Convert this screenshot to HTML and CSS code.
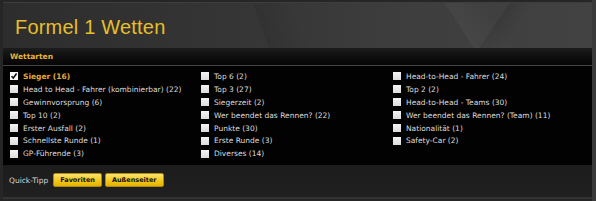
FILE: index.html
```html
<!DOCTYPE html>
<html lang="de">
<head>
<meta charset="utf-8">
<title>Formel 1 Wetten</title>
<link rel="stylesheet" href="styles.css">
</head>
<body>
<div class="frame">
  <div class="panel">
    <header class="head">
      <h1 class="title">Formel 1 Wetten</h1>
    </header>
    <div class="bar">Wettarten</div>
    <div class="list">
      <div class="col">
        <label class="item sel"><span class="box on"><svg viewBox="0 0 8 8" width="8" height="8"><path d="M1.5 4.2 L3.3 6 L6.6 1.6" fill="none" stroke="#111" stroke-width="1.6"/></svg></span>Sieger (16)</label>
        <label class="item"><span class="box"></span>Head to Head - Fahrer (kombinierbar) (22)</label>
        <label class="item"><span class="box"></span>Gewinnvorsprung (6)</label>
        <label class="item"><span class="box"></span>Top 10 (2)</label>
        <label class="item"><span class="box"></span>Erster Ausfall (2)</label>
        <label class="item"><span class="box"></span>Schnellste Runde (1)</label>
        <label class="item"><span class="box"></span>GP-Führende (3)</label>
      </div>
      <div class="col">
        <label class="item"><span class="box"></span>Top 6 (2)</label>
        <label class="item"><span class="box"></span>Top 3 (27)</label>
        <label class="item"><span class="box"></span>Siegerzeit (2)</label>
        <label class="item"><span class="box"></span>Wer beendet das Rennen? (22)</label>
        <label class="item"><span class="box"></span>Punkte (30)</label>
        <label class="item"><span class="box"></span>Erste Runde (3)</label>
        <label class="item"><span class="box"></span>Diverses (14)</label>
      </div>
      <div class="col">
        <label class="item"><span class="box"></span>Head-to-Head - Fahrer (24)</label>
        <label class="item"><span class="box"></span>Top 2 (2)</label>
        <label class="item"><span class="box"></span>Head-to-Head - Teams (30)</label>
        <label class="item"><span class="box"></span>Wer beendet das Rennen? (Team) (11)</label>
        <label class="item"><span class="box"></span>Nationalität (1)</label>
        <label class="item"><span class="box"></span>Safety-Car (2)</label>
      </div>
    </div>
    <footer class="foot">
      <span class="qt">Quick-Tipp</span>
      <button class="btn">Favoriten</button>
      <button class="btn">Außenseiter</button>
    </footer>
  </div>
</div>
</body>
</html>
```

FILE: styles.css
```css
html, body {
  margin: 0;
  padding: 0;
  background: #2b2b2b;
}
body {
  width: 596px;
  height: 201px;
  overflow: hidden;
  font-family: "DejaVu Sans", Verdana, sans-serif;
}
.frame {
  padding: 2px 4px 2px 3px;
  background: linear-gradient(to right, #262626 0, #262626 592px, #3a3a3a 592px);
  height: 201px;
  box-sizing: border-box;
}
.panel {
  display: flex;
  flex-direction: column;
  height: 100%;
}
.head {
  height: 46px;
  box-sizing: border-box;
  padding: 13px 0 0 12px;
  background:
    linear-gradient(57deg, transparent 0, transparent 395px, rgba(255,255,255,0.035) 395px, rgba(255,255,255,0.0) 430px),
    linear-gradient(124deg, transparent 0, transparent 420px, rgba(0,0,0,0.10) 420px, rgba(0,0,0,0.0) 440px),
    linear-gradient(70deg, transparent 0, transparent 250px, rgba(0,0,0,0.08) 250px, transparent 290px),
    linear-gradient(to right, #2d2d2d 0, #353535 40%, #3e3e3e 70%, #424242 100%);
  border-top: 1px solid #3e3e3e;
}
.title {
  margin: 0;
  font-family: "Liberation Sans", Arial, sans-serif;
  font-weight: normal;
  font-size: 20px;
  line-height: 22px;
  color: #e6bf2a;
  letter-spacing: 0.2px;
}
.bar {
  height: 18px;
  box-sizing: border-box;
  padding-left: 7px;
  line-height: 18px;
  font-size: 7.5px;
  font-weight: bold;
  color: #e8b43a;
  background: linear-gradient(to bottom, #1c1c1c 0, #0f0f0f 50%, #050505 100%);
  border-bottom: 1px solid #454545;
}
.list {
  display: grid;
  grid-template-columns: 191px 192px 1fr;
  padding: 4px 0 6px 7px;
  background: #020202;
  height: 99px;
  box-sizing: border-box;
}
.col {
  display: flex;
  flex-direction: column;
}
.item {
  display: flex;
  align-items: center;
  height: 12.9px;
  font-size: 7.5px;
  color: #dcdcdc;
  white-space: nowrap;
}
.item.sel {
  color: #e8a936;
  font-weight: bold;
}
.box {
  width: 8px;
  height: 8px;
  margin-right: 5px;
  background: linear-gradient(#f4f4f4, #dcdcdc);
  flex: none;
  display: flex;
}
.box.on { background: #fafafa; }
.foot {
  flex: 1;
  display: flex;
  align-items: center;
  gap: 3px;
  padding: 0 0 2px 6px;
  background: linear-gradient(#1c1c1c, #202020);
  border-bottom: 2px solid #333;
}
.qt {
  font-size: 7.5px;
  color: #d8d8d8;
  margin-right: 2px;
}
.btn {
  font-family: "DejaVu Sans", Verdana, sans-serif;
  font-size: 6.5px;
  font-weight: bold;
  color: #111;
  height: 14px;
  padding: 0 6px;
  border: 1px solid #b08a00;
  border-radius: 2px;
  background: linear-gradient(#fbe26a, #f2c81c 55%, #e4b300);
  line-height: 12px;
}
```
